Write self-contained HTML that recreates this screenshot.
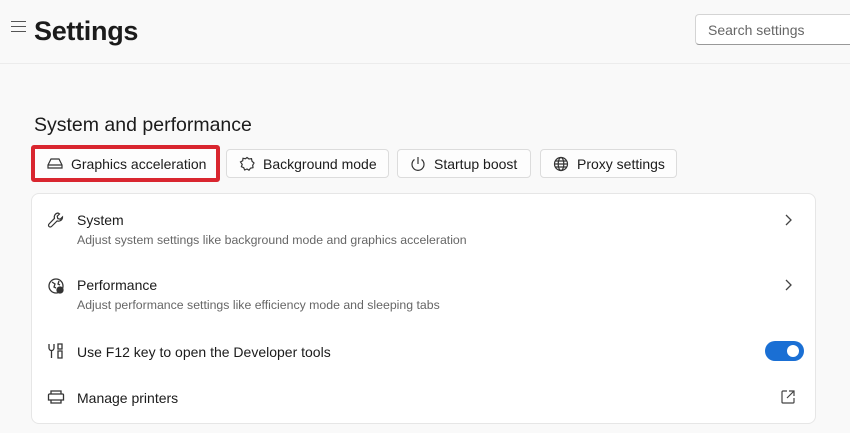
<!DOCTYPE html><html><head><style>
body{margin:0;width:850px;height:433px;background:#f9f9f9;font-family:"Liberation Sans",sans-serif;color:#1b1b1b;position:relative;overflow:hidden}
.a{position:absolute}
.hdr{left:0;top:0;width:850px;height:63px;border-bottom:1px solid #ececec}
.btn{position:absolute;top:149px;height:29px;background:#fdfdfd;border:1px solid #dcdcdc;border-radius:4px;box-sizing:border-box;font-size:14px;line-height:29px;padding-left:36px}
.btn svg{position:absolute;left:12px;top:6px}
.card{left:31px;top:193px;width:785px;height:231px;background:#fff;border:1px solid #e6e6e6;border-radius:8px;box-sizing:border-box}
.t{font-size:14px;left:77px}
.d{font-size:12.3px;color:#666;left:77px}
.ic{position:absolute;left:47px}
</style></head><body>
<div class="a hdr"></div>
<div class="a" style="left:11px;top:21px;width:15px;height:1px;background:#555;box-shadow:0 5px 0 #555,0 10px 0 #555"></div>
<div class="a" style="left:34px;top:16px;font-size:27px;font-weight:bold;letter-spacing:-0.3px">Settings</div>
<div class="a" style="left:695px;top:14px;width:160px;height:31px;border:1px solid #d4d4d4;border-bottom:1px solid #999;border-radius:4px;background:#fff;box-sizing:border-box;font-size:14px;color:#666;padding:7px 12px">Search settings</div>
<div class="a" style="left:34px;top:114px;font-size:19.5px">System and performance</div>
<div class="a" style="left:31px;top:145px;width:189px;height:37px;border:4px solid #d9262f;box-sizing:border-box;border-radius:3px;background:#fdfdfd"></div>
<div class="btn" style="left:35px;top:150px;width:181px;border:none;background:none;padding-left:36px"><svg width="16" height="16" viewBox="0 0 16 16" fill="none" stroke="#333" stroke-width="1.2"><path d="M4 3h8l3 6v3H1V9z M1 9h14"/></svg>Graphics acceleration</div>
<div class="btn" style="left:226px;width:163px"><svg width="16" height="16" viewBox="0 0 16 16" fill="none" stroke="#333" stroke-width="1.2"><path d="M8 1.5l2 1.5 2.5-.3.5 2.5 2 1.8-1.3 2.2.3 2.5-2.5.5-1.5 2-2-1.2-2.3 1-1-2.3-2.3-1 .8-2.4L1.5 6l2.2-1.2.3-2.5 2.5.4z"/></svg>Background mode</div>
<div class="btn" style="left:397px;width:134px"><svg width="16" height="16" viewBox="0 0 16 16" fill="none" stroke="#333" stroke-width="1.2"><path d="M8 1v7M4.5 3.5a6 6 0 1 0 7 0"/></svg>Startup boost</div>
<div class="btn" style="left:540px;width:137px"><svg width="16" height="16" viewBox="0 0 16 16" fill="none" stroke="#333" stroke-width="1.2"><circle cx="8" cy="8" r="6.5"/><ellipse cx="8" cy="8" rx="2.8" ry="6.5"/><path d="M1.5 8h13M2.5 5h11M2.5 11h11"/></svg>Proxy settings</div>
<div class="a card"></div>
<svg class="ic" style="top:211px" width="18" height="18" viewBox="0 0 18 18" fill="none" stroke="#333" stroke-width="1.2"><path d="M11 2a4 4 0 0 0-3.5 5.3L2 13a1.5 1.5 0 0 0 2.5 2.5l5.6-5.6A4 4 0 0 0 15.5 6l-2.3 2.2-2.4-.6-.6-2.4L12.5 3z"/></svg>
<div class="a t" style="top:212px">System</div>
<div class="a d" style="top:233px">Adjust system settings like background mode and graphics acceleration</div>
<svg class="a" style="left:783px;top:213px" width="10" height="14" viewBox="0 0 10 14" fill="none" stroke="#444" stroke-width="1.3"><path d="M3 2l5 5-5 5"/></svg>
<svg class="ic" style="top:277px" width="18" height="18" viewBox="0 0 18 18" fill="none" stroke="#333" stroke-width="1.3"><circle cx="9" cy="9" r="7"/><path d="M5 5l3 2-1 3 2 1M12 4l-1 3 2 1"/><circle cx="13" cy="13" r="3" fill="#333"/></svg>
<div class="a t" style="top:277px">Performance</div>
<div class="a d" style="top:298px">Adjust performance settings like efficiency mode and sleeping tabs</div>
<svg class="a" style="left:783px;top:278px" width="10" height="14" viewBox="0 0 10 14" fill="none" stroke="#444" stroke-width="1.3"><path d="M3 2l5 5-5 5"/></svg>
<svg class="ic" style="top:342px" width="18" height="18" viewBox="0 0 18 18" fill="none" stroke="#333" stroke-width="1.3"><path d="M2 2v4a2.5 2.5 0 0 0 5 0V2M4.5 8v8M11 2h4v5h-4zM11 9h4v7h-4z"/></svg>
<div class="a t" style="top:344px">Use F12 key to open the Developer tools</div>
<div class="a" style="left:765px;top:341px;width:39px;height:20px;border-radius:10px;background:#1a6fd4"></div>
<div class="a" style="left:787px;top:345px;width:12px;height:12px;border-radius:50%;background:#fff"></div>
<svg class="ic" style="top:388px" width="18" height="18" viewBox="0 0 18 18" fill="none" stroke="#333" stroke-width="1.3"><path d="M4 6V3h10v3M2.5 6h13a1 1 0 0 1 1 1v5h-15V7a1 1 0 0 1 1-1zM4 12v3h10v-3"/></svg>
<div class="a t" style="top:390px">Manage printers</div>
<svg class="a" style="left:780px;top:389px" width="16" height="16" viewBox="0 0 16 16" fill="none" stroke="#444" stroke-width="1.2"><path d="M7 2H3a1 1 0 0 0-1 1v10a1 1 0 0 0 1 1h10a1 1 0 0 0 1-1V9M9 2h5v5M14 2L7 9"/></svg>
</body></html>
